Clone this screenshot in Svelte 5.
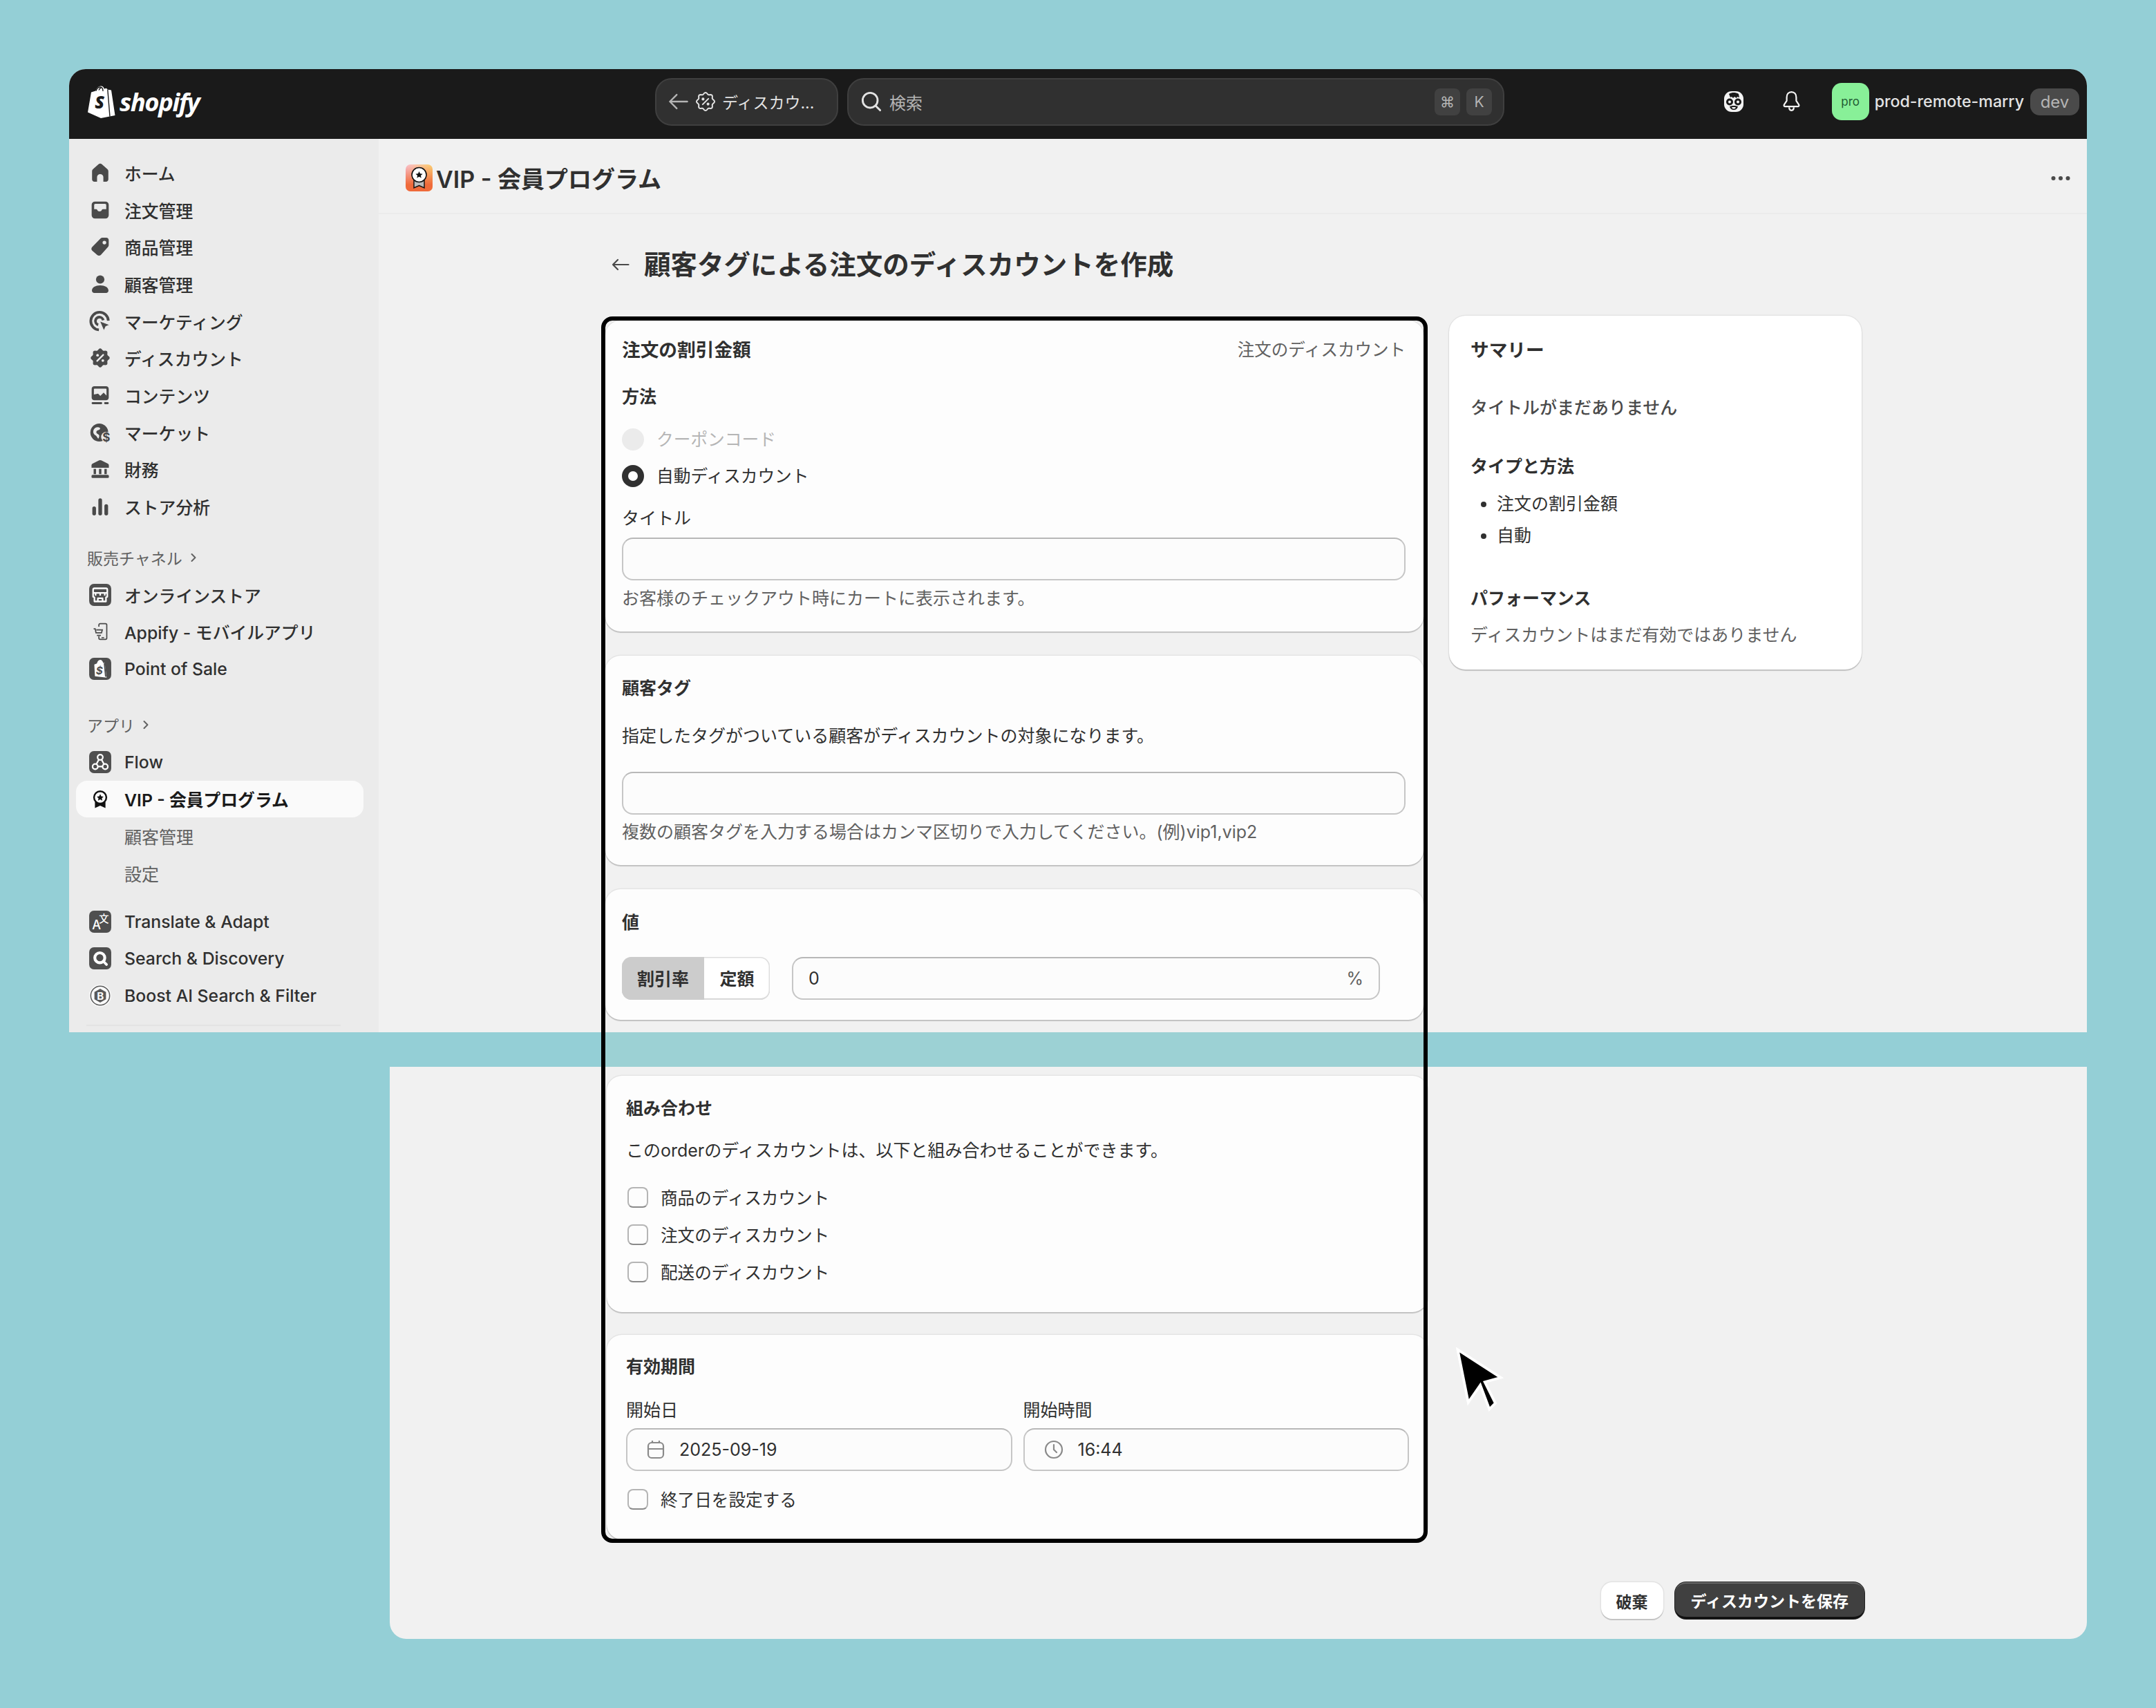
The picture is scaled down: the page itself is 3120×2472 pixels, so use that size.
<script>
	const badge = (() => {
		let d = '';
		for (let i = 0; i < 72; i++) {
			const a = (i / 72) * Math.PI * 2;
			const r = 6.6 + 0.65 * Math.cos(a * 8);
			d += `${i ? 'L' : 'M'}${(10 + r * Math.sin(a)).toFixed(2)} ${(10 - r * Math.cos(a)).toFixed(2)}`;
		}
		return d + 'Z';
	})();

	const square = '<rect x="1.6" y="1.6" width="16.8" height="16.8" rx="3.6" fill="#4f4f4f"/>';

	const icons = {
		home: '<path fill="#4a4a4a" d="M8.7 3.6a2 2 0 0 1 2.6 0l4 3.5c.6.5.9 1.1.9 1.900v6c0 1.100-.8 1.900-1.800 1.900H12.400v-3.500a2.400 2.400 0 0 0-4.800 0v3.500H5.600c-1 0-1.800-.8-1.800-1.900V9c0-.8.3-1.400.9-1.900Z"/>',
		inbox: '<path fill="#4a4a4a" fill-rule="evenodd" d="M6 3.500h8A2.500 2.500 0 0 1 16.500 6v8a2.500 2.500 0 0 1-2.500 2.500H6A2.500 2.500 0 0 1 3.500 14V6A2.500 2.500 0 0 1 6 3.500Zm-.6 5.900V6.200c0-.5.4-.9.9-.9h7.400c.5 0 .9.4.9.9v3.200h-2.500c-.4 0-.7.2-.9.6-.2.6-.9 1-1.700 1s-1.500-.4-1.700-1c-.2-.4-.5-.6-.9-.6Z"/>',
		tag: '<path fill="#4a4a4a" fill-rule="evenodd" d="M11.800 3.200h2.800c1.100 0 1.900.8 1.900 1.900v3.700c0 .6-.2 1.100-.6 1.500l-5.400 6c-.8.8-2 .8-2.800 0l-3.800-3.300c-.8-.8-.8-2 0-2.800l6.300-6.400c.4-.4 1-.6 1.600-.6ZM13.200 8.300a1.400 1.400 0 1 0 0-2.800 1.400 1.400 0 0 0 0 2.800Z"/>',
		person: '<circle cx="10" cy="6.600" r="3.200" fill="#4a4a4a"/><path fill="#4a4a4a" d="M3.700 15c0-2.500 2.800-4 6.300-4s6.300 1.500 6.300 4c0 1.100-.8 1.800-1.800 1.800h-9c-1 0-1.800-.7-1.800-1.800Z"/>',
		marketing: '<path fill="none" stroke="#4a4a4a" stroke-width="2" d="M9 16.500a6.700 6.700 0 1 1 7.200-7"/><path fill="none" stroke="#4a4a4a" stroke-width="2" d="M8.500 12.700a3 3 0 1 1 3.800-3.500"/><path fill="#4a4a4a" stroke="#ebebeb" stroke-width=".6" d="M9.500 9.700l8 3-3.200 1.400-1.500 3.300Z"/>',
		discount: `<path fill="#4a4a4a" d="${badge}"/><path stroke="#ebebeb" stroke-width="1.300" stroke-linecap="round" d="M12.300 7.700l-4.600 4.600"/><circle cx="8" cy="8" r="1" fill="#ebebeb"/><circle cx="12" cy="12" r="1" fill="#ebebeb"/>`,
		content: '<path fill="#4a4a4a" fill-rule="evenodd" d="M5.500 3.200h9c1.100 0 2 .9 2 2v6.600c0 1.100-.9 2-2 2h-9c-1.100 0-2-.9-2-2V5.200c0-1.100.9-2 2-2Zm-.3 6.300v-4c0-.3.2-.5.500-.5h8.600c.3 0 .5.200.5.500v4.700l-2.200-2.200-2.500 2.500-1.700-1.700Z"/><circle cx="11.800" cy="6.800" r="1" fill="#ebebeb"/><rect x="3.500" y="15.300" width="8" height="1.500" rx=".7" fill="#4a4a4a"/><rect x="13" y="15.300" width="3.500" height="1.500" rx=".7" fill="#4a4a4a"/>',
		market: '<circle cx="9.300" cy="10" r="6.800" fill="#4a4a4a"/><path fill="#ebebeb" d="M6.200 6.500c1.300-.9 2.700-.7 3.600 0 .5.700-.2 1.500-1.200 1.600-1 .2-1.800 1-1.500 2 .3 1 1.500 1 2 1.800.4.700.2 2-.6 2.800-.7-.7-1.100-1.800-1.900-2.400-1-.7-1.800-1.300-1.900-2.700 0-1.300.5-2.300 1.500-3.100Z"/><circle cx="14.600" cy="13.400" r="3.900" fill="#ebebeb"/><text x="14.600" y="16.600" text-anchor="middle" font-size="9" font-weight="700" font-family="Inter, sans-serif" fill="#4a4a4a">$</text>',
		bank: '<path fill="#4a4a4a" d="M9.200 3.300a2 2 0 0 1 1.600 0l5 2.500c.5.300.8.800.8 1.300V9H3.400V7.100c0-.5.300-1 .8-1.300Z"/><rect x="5" y="9.800" width="1.800" height="4" fill="#4a4a4a"/><rect x="9.100" y="9.800" width="1.800" height="4" fill="#4a4a4a"/><rect x="13.200" y="9.800" width="1.800" height="4" fill="#4a4a4a"/><rect x="3.400" y="14.300" width="13.200" height="2.400" rx=".8" fill="#4a4a4a"/>',
		bars: '<rect x="4" y="10" width="2.800" height="6.800" rx="1.400" fill="#4a4a4a"/><rect x="8.600" y="3.800" width="2.800" height="13" rx="1.400" fill="#4a4a4a"/><rect x="13.200" y="8.300" width="2.800" height="8.500" rx="1.400" fill="#4a4a4a"/>',
		store: square + '<g fill="none" stroke="#fff" stroke-width="1.200" stroke-linejoin="round"><path d="M5.600 5h8.800c.6 0 1 .4 1 1v5.500a2 2 0 0 1-1 .3v3.200H5.600v-3.200a2 2 0 0 1-1-.3V6c0-.6.4-1 1-1Z"/><path d="M4.600 8.500h10.800M6.500 8.500v2M10 8.500v2M13.500 8.500v2M8.200 15v-2.400h3.600V15"/></g>',
		appify: '<g fill="none" stroke="#4a4a4a" stroke-width=".9"><path d="M9 6.300V5c0-.6.4-1 1-1h4c.6 0 1 .4 1 1v10c0 .6-.4 1-1 1h-4c-.6 0-1-.4-1-1v-1.500"/><path d="M5 8h1.200l.6 3h4.200l.6-2.200H7M7.500 13h3"/></g><rect x="11" y="14.300" width="2" height=".8" fill="#4a4a4a"/>',
		pos: square + '<path fill="#fff" d="M5.500 6.700l2-.8c.3-1.500 1.300-2.700 2.500-2.700 1.100 0 1.900 1 2.200 2.200l1.300.3 1.400 11-8.900-1Z"/><path fill="none" stroke="#4f4f4f" stroke-width="1" d="M13.200 5.800l1 10.200"/><text x="9.300" y="14.300" text-anchor="middle" font-size="8" font-weight="700" font-style="italic" font-family="Inter, sans-serif" fill="#4f4f4f">$</text>',
		flow: square + '<g fill="none" stroke="#fff" stroke-width="1.200"><circle cx="10" cy="6.300" r="2"/><circle cx="6.200" cy="13.400" r="2"/><circle cx="13.800" cy="13.400" r="2"/><path d="M9 8l-1.900 3.600M11 8l1.900 3.600M8.200 13.400h3.600"/></g>',
		vip: '<path fill="#111" d="M6 12.500v4.600l4-1.800 4 1.800v-4.600Z"/><circle cx="10" cy="9" r="4.700" fill="#fff" stroke="#111" stroke-width="1.300"/><path fill="#111" d="M10 6.500l.8 1.700 1.800.2-1.300 1.200.3 1.800-1.600-.9-1.600.9.300-1.800-1.300-1.200 1.800-.2Z"/>',
		translate: square + '<text x="7.200" y="15.800" text-anchor="middle" font-size="9.500" font-family="Inter, sans-serif" fill="#fff">A</text><text x="12.800" y="10.600" text-anchor="middle" font-size="7.500" font-family="Noto Sans CJK JP, sans-serif" fill="#fff">文</text>',
		search: square + '<circle cx="9.700" cy="9.600" r="3.800" fill="none" stroke="#fff" stroke-width="2.200"/><path stroke="#fff" stroke-width="2" stroke-linecap="round" d="M12.600 12.500l2.200 2.200"/>',
		boost: '<circle cx="10" cy="10" r="8.400" fill="#fafafa"/><circle cx="10" cy="10" r="7.200" fill="#fafafa" stroke="#5a5a5a" stroke-width=".8"/><path fill="#5a5a5a" d="M10 4.800l4.400 2.500v5.400L10 15.200l-4.400-2.500V7.300Z"/><text x="10.100" y="13" text-anchor="middle" font-size="8" font-weight="700" font-family="Inter, sans-serif" fill="#fafafa">B</text>'
	};

	const mainNav = [
		['home', 'ホーム'],
		['inbox', '注文管理'],
		['tag', '商品管理'],
		['person', '顧客管理'],
		['marketing', 'マーケティング'],
		['discount', 'ディスカウント'],
		['content', 'コンテンツ'],
		['market', 'マーケット'],
		['bank', '財務'],
		['bars', 'ストア分析']
	];
	const channels = [
		['store', 'オンラインストア'],
		['appify', 'Appify - モバイルアプリ'],
		['pos', 'Point of Sale']
	];
	const pinned = [
		['translate', 'Translate & Adapt'],
		['search', 'Search & Discovery'],
		['boost', 'Boost AI Search & Filter']
	];
	const combos = ['商品のディスカウント', '注文のディスカウント', '配送のディスカウント'];
</script>

{#snippet navItem(icon, label, active = false)}
	<div class="nav-item" class:active>
		<svg class="nav-icon" viewBox="0 0 20 20">{@html icons[icon]}</svg>
		<span>{label}</span>
	</div>
{/snippet}

{#snippet navHeading(label)}
	<div class="nav-heading">
		<span>{label}</span>
		<svg viewBox="0 0 16 16" width="16" height="16" fill="none" stroke="#616161" stroke-width="2" stroke-linecap="round" stroke-linejoin="round"><path d="M5.500 3l5 5-5 5" /></svg>
	</div>
{/snippet}

{#snippet checkRow(label, cls)}
	<div class="check-row {cls}">
		<span class="checkbox"></span>
		<span>{label}</span>
	</div>
{/snippet}

<div class="page">
	<section class="window">
		<header class="topbar">
			<div class="brand">
				<svg class="bag" viewBox="0 0 41 47">
					<path fill="#fff" d="M1 38.500L6 9.500l6.500-2C13.500 3.500 16.500 0.500 20 0.500c2.500 0 4 1.500 4.800 4l3-.8 2.500 2 4.700.8 5.500 36.500L20 47Z" />
					<path fill="none" stroke="#1a1a1a" stroke-width="1.400" d="M13 7.500c1-3 3.500-5.500 6-5.500 3 0 4 3 4 6M17 6.500c.8-2 2.200-3.500 4-4M29.800 5.500L33 44.800" />
					<text x="18" y="33" text-anchor="middle" font-size="25" font-weight="800" font-style="italic" font-family="Open Sans, sans-serif" fill="#1a1a1a">S</text>
				</svg>
				<span class="wordmark">shopify</span>
			</div>

			<div class="crumb">
				<svg viewBox="0 0 20 20" width="36" height="36" fill="none" stroke="#b5b5b5" stroke-width="1.300" stroke-linecap="round" stroke-linejoin="round"><path d="M17 10H3M8.500 4.500L3 10l5.500 5.500" /></svg>
				<svg class="crumb-badge" viewBox="0 0 20 20" width="36" height="36" fill="none" stroke="#e3e3e3" stroke-width="1.100"><path d={badge} /><path stroke-linecap="round" d="M12.300 7.700l-4.600 4.600" /><circle cx="8" cy="8" r=".6" fill="#e3e3e3" /><circle cx="12" cy="12" r=".6" fill="#e3e3e3" /></svg>
				<span>ディスカウ...</span>
			</div>

			<div class="search">
				<svg viewBox="0 0 20 20" width="36" height="36" fill="none" stroke="#e3e3e3" stroke-width="1.600" stroke-linecap="round"><circle cx="9" cy="9" r="6" /><path d="M13.500 13.500L17 17" /></svg>
				<span class="search-text">検索</span>
				<span class="kbd first">⌘</span>
				<span class="kbd">K</span>
			</div>

			<div class="top-right">
				<svg class="mask" viewBox="0 0 30 30">
					<rect x="1" y="0" width="28" height="30" rx="11" fill="#f3f3f3" />
					<path fill="#1a1a1a" d="M8 4c2-1.500 5-2 7-2s5 .5 7 2l1 5-3-1-1 2-3-2-2 2-2-2-2 1Z" />
					<circle cx="9" cy="15.500" r="5" fill="#1a1a1a" /><circle cx="21" cy="15.500" r="5" fill="#1a1a1a" />
					<circle cx="9" cy="15.500" r="2" fill="#f3f3f3" /><circle cx="21" cy="15.500" r="2" fill="#f3f3f3" />
					<path fill="#1a1a1a" d="M9 22c3-1.500 9-1.500 12 0-1 4-3.500 5-6 5s-5-1-6-5Z" />
					<path fill="#f3f3f3" d="M12 23.500c2-.6 4-.6 6 0-.6 1.500-1.800 2-3 2s-2.400-.5-3-2Z" />
				</svg>
				<svg class="bell" viewBox="3 1 22 27" fill="none" stroke="#f3f3f3" stroke-width="2" stroke-linejoin="round">
					<path d="M14 2c-3.800 0-6.200 3-6.200 7v4.500L4.500 18.500c-.8 1.300 0 2.500 1.300 2.500h16.400c1.300 0 2.100-1.200 1.300-2.500l-3.300-5V9c0-4-2.400-7-6.200-7Z" />
					<path d="M11 22c0 2.500 1.300 4 3 4s3-1.500 3-4" />
				</svg>
				<span class="avatar">pro</span>
				<span class="shop-name">prod-remote-marry</span>
				<span class="dev">dev</span>
			</div>
		</header>

		<div class="shell">
			<nav class="sidebar">
				{#each mainNav as [icon, label]}
					{@render navItem(icon, label)}
				{/each}

				<div class="nav-group first-group">
					{@render navHeading('販売チャネル')}
					{#each channels as [icon, label]}
						{@render navItem(icon, label)}
					{/each}
				</div>

				<div class="nav-group apps-group">
					{@render navHeading('アプリ')}
					{@render navItem('flow', 'Flow')}
					{@render navItem('vip', 'VIP - 会員プログラム', true)}
					<div class="nav-sub">顧客管理</div>
					<div class="nav-sub">設定</div>
				</div>

				<div class="nav-group pinned-group">
					{#each pinned as [icon, label]}
						{@render navItem(icon, label)}
					{/each}
				</div>
				<div class="nav-divider"></div>
			</nav>

			<main class="main">
				<div class="app-title">
					<svg class="app-logo" viewBox="0 0 39 39">
						<defs>
							<linearGradient id="vipTop" x1="0" y1="0" x2="1" y2="0">
								<stop offset="0" stop-color="#f9c0d0" />
								<stop offset="1" stop-color="#fbd070" />
							</linearGradient>
							<linearGradient id="vipFade" x1="0" y1="0" x2="0" y2="1">
								<stop offset="0" stop-color="#f0683a" stop-opacity="0" />
								<stop offset=".75" stop-color="#ef6a3a" />
							</linearGradient>
						</defs>
						<rect width="39" height="39" rx="7" fill="url(#vipTop)" />
						<rect width="39" height="39" rx="7" fill="url(#vipFade)" />
						<path fill="#bbb" stroke="#111" stroke-width="1.400" d="M12 20v14l7.500-3.500L27 34V20Z" />
						<circle cx="19.500" cy="15" r="10.500" fill="#fff" stroke="#111" stroke-width="1.600" />
						<path fill="#111" d="M19.500 10l1.500 3.300 3.600.4-2.700 2.400.8 3.500-3.200-1.800-3.200 1.800.8-3.500-2.700-2.400 3.600-.4Z" />
					</svg>
					<span>VIP - 会員プログラム</span>
					<svg class="more" viewBox="0 0 28 8" width="28" height="8" fill="#4a4a4a"><circle cx="3.500" cy="4" r="3" /><circle cx="14" cy="4" r="3" /><circle cx="24.500" cy="4" r="3" /></svg>
				</div>

				<div class="page-head">
					<svg viewBox="0 0 26 20" width="26" height="20" fill="none" stroke="#4a4a4a" stroke-width="2.200" stroke-linecap="round" stroke-linejoin="round"><path d="M24.500 10H2M9 3l-7 7 7 7" /></svg>
					<h1>顧客タグによる注文のディスカウントを作成</h1>
				</div>

				<div class="layout">
					<div class="col">
						<div class="card card-method">
							<div class="row-between">
								<h2 class="big">注文の割引金額</h2>
								<span class="muted type-label">注文のディスカウント</span>
							</div>
							<h3 class="method-label">方法</h3>
							<div class="radio-row disabled"><span class="radio off"></span>クーポンコード</div>
							<div class="radio-row second"><span class="radio on"></span>自動ディスカウント</div>
							<div class="field-label">タイトル</div>
							<input class="input title-input" readonly />
							<div class="muted help">お客様のチェックアウト時にカートに表示されます。</div>
						</div>

						<div class="card card-tags">
							<h3>顧客タグ</h3>
							<p class="tags-desc">指定したタグがついている顧客がディスカウントの対象になります。</p>
							<input class="input tags-input" readonly />
							<div class="muted help">複数の顧客タグを入力する場合はカンマ区切りで入力してください。(例)vip1,vip2</div>
						</div>

						<div class="card card-value">
							<h3>値</h3>
							<div class="value-row">
								<div class="segment">
									<span class="seg active">割引率</span>
									<span class="seg">定額</span>
								</div>
								<div class="input value-input"><span>0</span><span class="pct">%</span></div>
							</div>
						</div>
					</div>

					<aside class="card summary">
						<h2 class="big">サマリー</h2>
						<p class="sum-title">タイトルがまだありません</p>
						<h3 class="sum-type">タイプと方法</h3>
						<ul>
							<li>注文の割引金額</li>
							<li>自動</li>
						</ul>
						<h3 class="sum-perf">パフォーマンス</h3>
						<p class="muted sum-note">ディスカウントはまだ有効ではありません</p>
					</aside>
				</div>
			</main>
		</div>
	</section>

	<section class="lower">
		<div class="lower-col">
			<div class="card card-combo">
				<h3>組み合わせ</h3>
				<p class="combo-desc">このorderのディスカウントは、以下と組み合わせることができます。</p>
				{#each combos as label, i}
					{@render checkRow(label, i === 0 ? 'combo-first' : 'combo-next')}
				{/each}
			</div>

			<div class="card card-dates">
				<h3>有効期間</h3>
				<div class="date-grid">
					<div>
						<div class="field-label">開始日</div>
						<div class="input date-input">
							<svg viewBox="0 0 26 28" width="26" height="28" fill="none" stroke="#8a8a8a" stroke-width="2.200"><rect x="2" y="4" width="22" height="22" rx="5" /><path d="M2 13h22M8 1v4M18 1v4" /></svg>
							<span>2025-09-19</span>
						</div>
					</div>
					<div>
						<div class="field-label">開始時間</div>
						<div class="input date-input">
							<svg viewBox="0 0 28 28" width="28" height="28" fill="none" stroke="#8a8a8a" stroke-width="2.200" stroke-linecap="round"><circle cx="14" cy="14" r="12" /><path d="M14 7v7l4 4" /></svg>
							<span>16:44</span>
						</div>
					</div>
				</div>
				{@render checkRow('終了日を設定する', 'end-date')}
			</div>
		</div>

		<div class="actions">
			<span class="btn">破棄</span>
			<span class="btn primary">ディスカウントを保存</span>
		</div>
	</section>

	<div class="strip-tint"></div>
	<div class="frame"></div>
	<svg class="cursor" viewBox="0 0 66 86">
		<path fill="#000" stroke="#fff" stroke-width="3.500" stroke-linejoin="miter" d="M5 3L62 40 41 46 55 74 47 82 35 50 19 73Z" />
	</svg>
</div>

<style>
	:global(body) {
		margin: 0;
		background: #94cfd6;
		font-family: Inter, 'Noto Sans CJK JP', sans-serif;
		font-size: 25px;
		color: #303030;
	}

	.page {
		position: relative;
		width: 3120px;
		height: 2472px;
		padding-top: 100px;
		box-sizing: border-box;
		overflow: hidden;
	}

	h1, h2, h3, p, ul {
		margin: 0;
		padding: 0;
	}

	h2, h3 {
		font-size: 25px;
		font-weight: 700;
		line-height: 36px;
		color: #303030;
	}

	h2.big {
		font-size: 26.700px;
	}

	p {
		line-height: 36px;
	}

	.window {
		margin-left: 100px;
		width: 2920px;
		height: 1394px;
		border-radius: 24px 24px 0 0;
		overflow: hidden;
		background: #f1f1f1;
	}

	.topbar {
		height: 101px;
		background: #1a1a1a;
		display: flex;
		align-items: center;
		padding: 0 11px 7px 26px;
		box-sizing: border-box;
	}

	.brand {
		width: 822px;
		display: flex;
		align-items: center;
		gap: 6px;
	}

	.bag {
		width: 41px;
		height: 47px;
	}

	.wordmark {
		font-family: 'Open Sans', sans-serif;
		font-size: 36.500px;
		font-style: italic;
		font-weight: 700;
		letter-spacing: -1.500px;
		color: #fff;
		line-height: 47px;
	}

	.crumb, .search {
		height: 69px;
		box-sizing: border-box;
		background: #303030;
		border: 2px solid #3f3f3f;
		border-radius: 24px;
		display: flex;
		align-items: center;
	}

	.crumb {
		width: 265px;
		padding-left: 14px;
		color: #e3e3e3;
		font-size: 23px;
		white-space: nowrap;
	}

	.crumb-badge {
		margin: 0 6px 0 3px;
	}

	.search {
		width: 951px;
		margin-left: 13px;
		padding: 0 16px 0 15px;
		color: #e3e3e3;
	}

	.search-text {
		margin-left: 8px;
		font-size: 24px;
		color: #b5b5b5;
		flex: 1;
	}

	.kbd {
		width: 37px;
		height: 39px;
		border-radius: 8px;
		background: #414141;
		color: #b5b5b5;
		font-size: 21px;
		display: flex;
		align-items: center;
		justify-content: center;
		margin-left: 9px;
	}

	.top-right {
		margin-left: auto;
		display: flex;
		align-items: center;
		color: #e3e3e3;
	}

	.mask {
		width: 30px;
		height: 30px;
		margin-right: 55px;
	}

	.bell {
		width: 27px;
		height: 30px;
		margin-right: 45px;
	}

	.avatar {
		width: 54px;
		height: 54px;
		border-radius: 14px;
		background: #88f098;
		color: #1f5a33;
		font-size: 17px;
		display: flex;
		align-items: center;
		justify-content: center;
		margin-right: 8px;
	}

	.shop-name {
		font-size: 23.200px;
		font-weight: 500;
		margin-right: 9px;
	}

	.dev {
		width: 71px;
		height: 39px;
		border-radius: 14px;
		background: #4a4a4a;
		color: #b5b5b5;
		display: flex;
		align-items: center;
		justify-content: center;
		font-size: 24px;
	}

	.shell {
		display: flex;
		height: 1293px;
	}

	.sidebar {
		width: 448px;
		flex: none;
		background: #ebebeb;
		padding-top: 22px;
		box-sizing: border-box;
	}

	.nav-item {
		height: 53.700px;
		margin: 0 22px 0 10px;
		padding-left: 16px;
		display: flex;
		align-items: center;
		gap: 16px;
		border-radius: 16px;
		font-size: 24.800px;
		font-weight: 500;
		white-space: nowrap;
	}

	.nav-item.active {
		background: #fafafa;
		color: #1a1a1a;
		font-weight: 600;
	}

	.nav-icon {
		width: 38px;
		height: 38px;
		flex: none;
	}

	.nav-heading {
		height: 54px;
		margin-left: 26px;
		display: flex;
		align-items: center;
		gap: 8px;
		font-size: 23px;
		color: #616161;
	}

	.nav-sub {
		height: 53.700px;
		margin-left: 80px;
		display: flex;
		align-items: center;
		color: #616161;
	}

	.first-group { margin-top: 20px; }
	.apps-group { margin-top: 27px; }
	.pinned-group { margin-top: 16px; }

	.nav-divider {
		height: 2px;
		background: #e3e3e3;
		margin: 15px 55px 0 25px;
	}

	.main {
		flex: 1;
		min-width: 0;
	}

	.app-title {
		height: 109px;
		box-sizing: border-box;
		border-bottom: 2px solid #ebebeb;
		display: flex;
		align-items: center;
		padding: 6px 24px 0 39px;
		font-size: 34px;
		font-weight: 600;
		gap: 5px;
	}

	.app-logo {
		width: 39px;
		height: 39px;
	}

	.more {
		margin-left: auto;
	}

	.page-head {
		height: 147px;
		box-sizing: border-box;
		display: flex;
		align-items: center;
		padding: 0 0 8px 337px;
		gap: 21px;
	}

	.page-head svg {
		margin-top: 6px;
	}

	h1 {
		font-size: 38.500px;
		font-weight: 700;
		color: #303030;
	}

	.layout {
		display: flex;
		align-items: flex-start;
		gap: 37px;
		padding-left: 328px;
	}

	.col {
		width: 1184px;
		padding-top: 7px;
		display: flex;
		flex-direction: column;
		gap: 35px;
	}

	.card {
		background: #fdfdfd;
		border-radius: 22px;
		padding-left: 24px;
		padding-right: 26px;
		box-shadow: 0 2px 1px 0 rgba(0, 0, 0, 0.16), 0 0 0 1.500px rgba(0, 0, 0, 0.05);
	}

	.muted {
		color: #616161;
		line-height: 36px;
	}

	.type-label {
		font-size: 24.500px;
	}

	.row-between {
		display: flex;
		justify-content: space-between;
	}

	.card-method { padding-top: 24px; padding-bottom: 30px; }
	.method-label { margin-top: 32px; }

	.radio-row {
		margin-top: 24px;
		height: 36px;
		display: flex;
		align-items: center;
		gap: 18px;
		font-size: 24.700px;
	}

	.radio-row.second { margin-top: 17px; }
	.radio-row.disabled { color: #b5b5b5; }

	.radio {
		width: 32px;
		height: 32px;
		margin-top: 3px;
		border-radius: 50%;
		box-sizing: border-box;
	}

	.radio.off { background: #ebebeb; }
	.radio.on { border: 9px solid #303030; background: #fff; }

	.field-label {
		line-height: 36px;
	}

	.card-method .field-label { margin-top: 27px; }

	.input {
		display: block;
		width: 100%;
		height: 62px;
		box-sizing: border-box;
		background: #fcfcfc;
		border: 2px solid #c6c6c6;
		border-top-color: #b8b8b8;
		border-radius: 16px;
		font: inherit;
		outline: none;
	}

	.title-input { margin-top: 10px; }
	.help { margin-top: 8px; }

	.card-tags { padding-top: 29px; padding-bottom: 30px; }
	.tags-desc { margin-top: 33px; }
	.tags-input { margin-top: 34px; }
	.card-tags .help { margin-top: 7px; }

	.card-value { padding-top: 30px; padding-bottom: 29px; }

	.value-row {
		margin-top: 32px;
		display: flex;
		gap: 32px;
	}

	.segment {
		width: 214px;
		height: 62px;
		flex: none;
		display: flex;
		border-radius: 14px;
		overflow: hidden;
		background: #fff;
		box-sizing: border-box;
		box-shadow: inset 0 0 0 1.500px #dedede, inset 0 -2px 0 #c4c4c4;
	}

	.seg {
		flex: 1;
		display: flex;
		align-items: center;
		justify-content: center;
		padding-bottom: 3px;
		font-weight: 600;
	}

	.seg.active {
		flex: none;
		width: 119px;
		background: #cccccc;
	}

	.value-input {
		width: 851px;
		flex: none;
		display: flex;
		align-items: center;
		justify-content: space-between;
		padding: 0 22px 0 22px;
	}

	.pct { color: #616161; }

	.summary {
		width: 597px;
		box-sizing: border-box;
		background: #fff;
		padding: 31px 30px 32px 31px;
		border-radius: 24px;
	}

	.sum-title { margin-top: 48px; color: #4a4a4a; font-weight: 500; }
	.sum-type { margin-top: 49px; }

	ul {
		margin-top: 18px;
		padding-left: 38px;
		line-height: 36px;
	}

	li + li { margin-top: 10px; }

	.sum-perf { margin-top: 55px; }
	.sum-note { margin-top: 17px; }

	.lower {
		margin: 50px 0 0 564px;
		width: 2456px;
		height: 828px;
		box-sizing: border-box;
		background: #f1f1f1;
		border-radius: 0 0 24px 24px;
		padding-top: 13px;
	}

	.lower-col {
		margin-left: 314px;
		width: 1188px;
		display: flex;
		flex-direction: column;
		gap: 33px;
	}

	.card-combo { padding: 29px 26px 41px 28px; }
	.combo-desc { margin-top: 25px; }

	.check-row {
		height: 36px;
		display: flex;
		align-items: center;
		gap: 18px;
		font-size: 24.600px;
	}

	.check-row.combo-first { margin-top: 31px; }
	.check-row.combo-next { margin-top: 18px; }
	.check-row.end-date { margin-top: 22px; }

	.checkbox {
		width: 30px;
		height: 30px;
		box-sizing: border-box;
		margin: 2px 0 0 2px;
		border: 2px solid #b5b5b5;
		border-bottom-color: #8a8a8a;
		border-radius: 8px;
		background: #fdfdfd;
	}

	.card-dates { padding: 28px 27px 41px 28px; }

	.date-grid {
		margin-top: 27px;
		display: grid;
		grid-template-columns: 1fr 1fr;
		gap: 16px;
	}

	.date-input {
		margin-top: 8px;
		display: flex;
		align-items: center;
		gap: 21px;
		padding-left: 28px;
	}

	.actions {
		display: flex;
		justify-content: flex-end;
		gap: 17px;
		margin-top: 62px;
		padding-right: 322px;
	}

	.btn {
		height: 53px;
		padding: 0 22px;
		display: flex;
		align-items: center;
		font-size: 23px;
		font-weight: 600;
		background: #fff;
		border-radius: 16px;
		box-shadow: 0 2px 0 #c4c4c4, 0 0 0 1.500px #e3e3e3;
		box-sizing: border-box;
	}

	.btn.primary {
		padding: 0 23px;
		color: #fff;
		background: #404040;
		border-top: 2px solid #6a6a6a;
		border-bottom: 3px solid #111;
		box-shadow: 0 0 0 1px #222;
	}

	/* annotations lying over the page */
	.strip-tint {
		position: absolute;
		left: 876px;
		top: 1494px;
		width: 1184px;
		height: 50px;
		background: #9cd1d4;
	}

	.frame {
		position: absolute;
		left: 870px;
		top: 458px;
		width: 1196px;
		height: 1775px;
		box-sizing: border-box;
		border: 6px solid #000;
		border-radius: 16px;
	}

	.cursor {
		position: absolute;
		left: 2104px;
		top: 1950px;
		width: 72px;
		height: 94px;
	}
</style>
